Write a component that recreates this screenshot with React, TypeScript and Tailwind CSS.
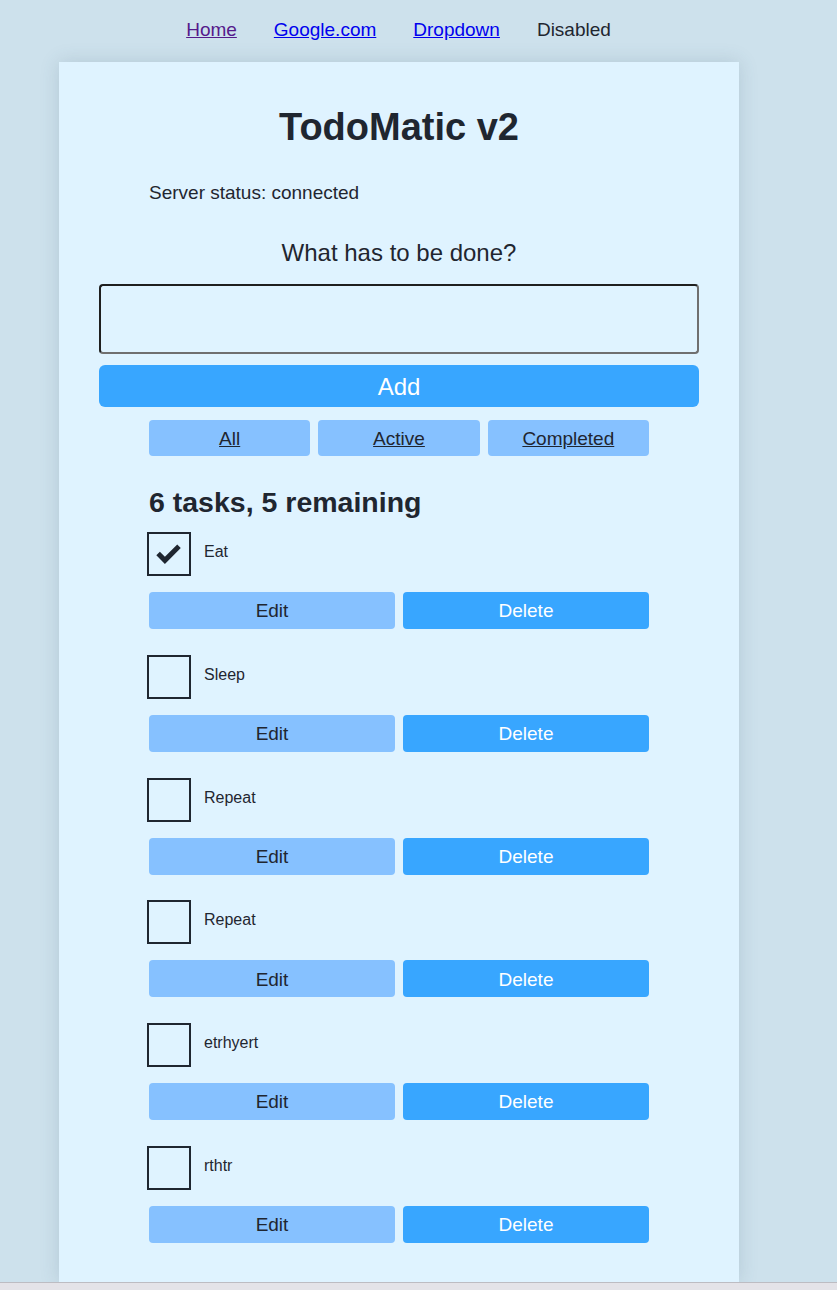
import { useState } from 'react';

interface Task {
  id: number;
  name: string;
  done: boolean;
}

const initialTasks: Task[] = [
  { id: 1, name: 'Eat', done: true },
  { id: 2, name: 'Sleep', done: false },
  { id: 3, name: 'Repeat', done: false },
  { id: 4, name: 'Repeat', done: false },
  { id: 5, name: 'etrhyert', done: false },
  { id: 6, name: 'rthtr', done: false },
];

function TodoItem({ task, onToggle }: { task: Task; onToggle: () => void }) {
  return (
    <li className="flex flex-col">
      <div className="flex items-start">
        <button
          type="button"
          onClick={onToggle}
          className="ml-[-2px] w-[44px] h-[44px] border-2 border-[#1f2630] flex items-center justify-center shrink-0"
        >
          {task.done && (
            <svg width="44" height="44" viewBox="0 0 44 44">
              <polyline
                points="10,21.5 17.5,29 33,13.5"
                fill="none"
                stroke="#1f2630"
                strokeWidth="5.5"
              />
            </svg>
          )}
        </button>
        <label className="ml-[13px] mt-[10px] text-[16px] leading-[20px] text-[#1f2630]">{task.name}</label>
      </div>
      <div className="mt-[16px] flex gap-[8px]">
        <button className="flex-1 h-[37px] pt-[2px] rounded-[4px] bg-[#86c1ff] text-[19px] text-[#1f2630]">Edit</button>
        <button className="flex-1 h-[37px] pt-[2px] rounded-[4px] bg-[#38a6ff] text-[19px] text-white">Delete</button>
      </div>
    </li>
  );
}

export default function App() {
  const [tasks, setTasks] = useState(initialTasks);
  const remaining = tasks.filter((t) => !t.done).length;

  return (
    <div
      className="h-[1290px] overflow-hidden flex flex-col bg-[#cde1ec] text-[#1f2630]"
      style={{ fontFamily: '"Liberation Sans", Arial, sans-serif' }}
    >
      {/* Nav */}
      <nav className="h-[62px] shrink-0 flex justify-center gap-[37px] pt-[19px] pr-[40px] text-[19px] leading-[22px]">
        <a href="#" className="underline text-[#551a8b]">Home</a>
        <a href="#" className="underline text-[#0000ee]">Google.com</a>
        <a href="#" className="underline text-[#0000ee]">Dropdown</a>
        <span className="text-[#1f2630]">Disabled</span>
      </nav>

      {/* Card */}
      <div className="ml-[59px] w-[680px] flex-1 bg-[#dff3ff] shadow-[0_0_18px_rgba(60,90,110,0.18)] px-[40px] pt-[43px]">
        <h1 className="text-center text-[38px] leading-[44px] font-bold">TodoMatic v2</h1>

        <p className="mt-[33px] pl-[50px] text-[19px] leading-[22px]">Server status: connected</p>

        <h2 className="mt-[35px] text-center text-[24px] leading-[28px]">What has to be done?</h2>

        <input
          type="text"
          className="mt-[17px] block w-full h-[70px] rounded-[4px] border-2 border-t-[#1f1f1f] border-l-[#1f1f1f] border-r-[#6f6f6f] border-b-[#6f6f6f] bg-[#dff3ff] outline-none"
        />
        <button className="mt-[11px] block w-full h-[42px] pt-[2px] rounded-[6px] bg-[#38a6ff] text-white text-[24px]">Add</button>

        <div className="mt-[13px] mx-[50px] flex gap-[8px]">
          <button className="flex-1 h-[36px] pt-[2px] rounded-[4px] bg-[#86c1ff] text-[19px] underline">All</button>
          <button className="flex-1 h-[36px] pt-[2px] rounded-[4px] bg-[#86c1ff] text-[19px] underline">Active</button>
          <button className="flex-1 h-[36px] pt-[2px] rounded-[4px] bg-[#86c1ff] text-[19px] underline">Completed</button>
        </div>

        <h2 className="mt-[30px] ml-[50px] text-[28.5px] leading-[32px] font-bold">
          {tasks.length} tasks, {remaining} remaining
        </h2>

        <ul className="mt-[14px] mx-[50px] flex flex-col gap-[25.75px]">
          {tasks.map((t) => (
            <TodoItem
              key={t.id}
              task={t}
              onToggle={() => setTasks(tasks.map((x) => (x.id === t.id ? { ...x, done: !x.done } : x)))}
            />
          ))}
        </ul>
      </div>

      {/* bottom scrollbar strip */}
      <div className="h-[8px] shrink-0 bg-[#e4e3e8] border-t border-[#bdbcc2]" />
    </div>
  );
}
